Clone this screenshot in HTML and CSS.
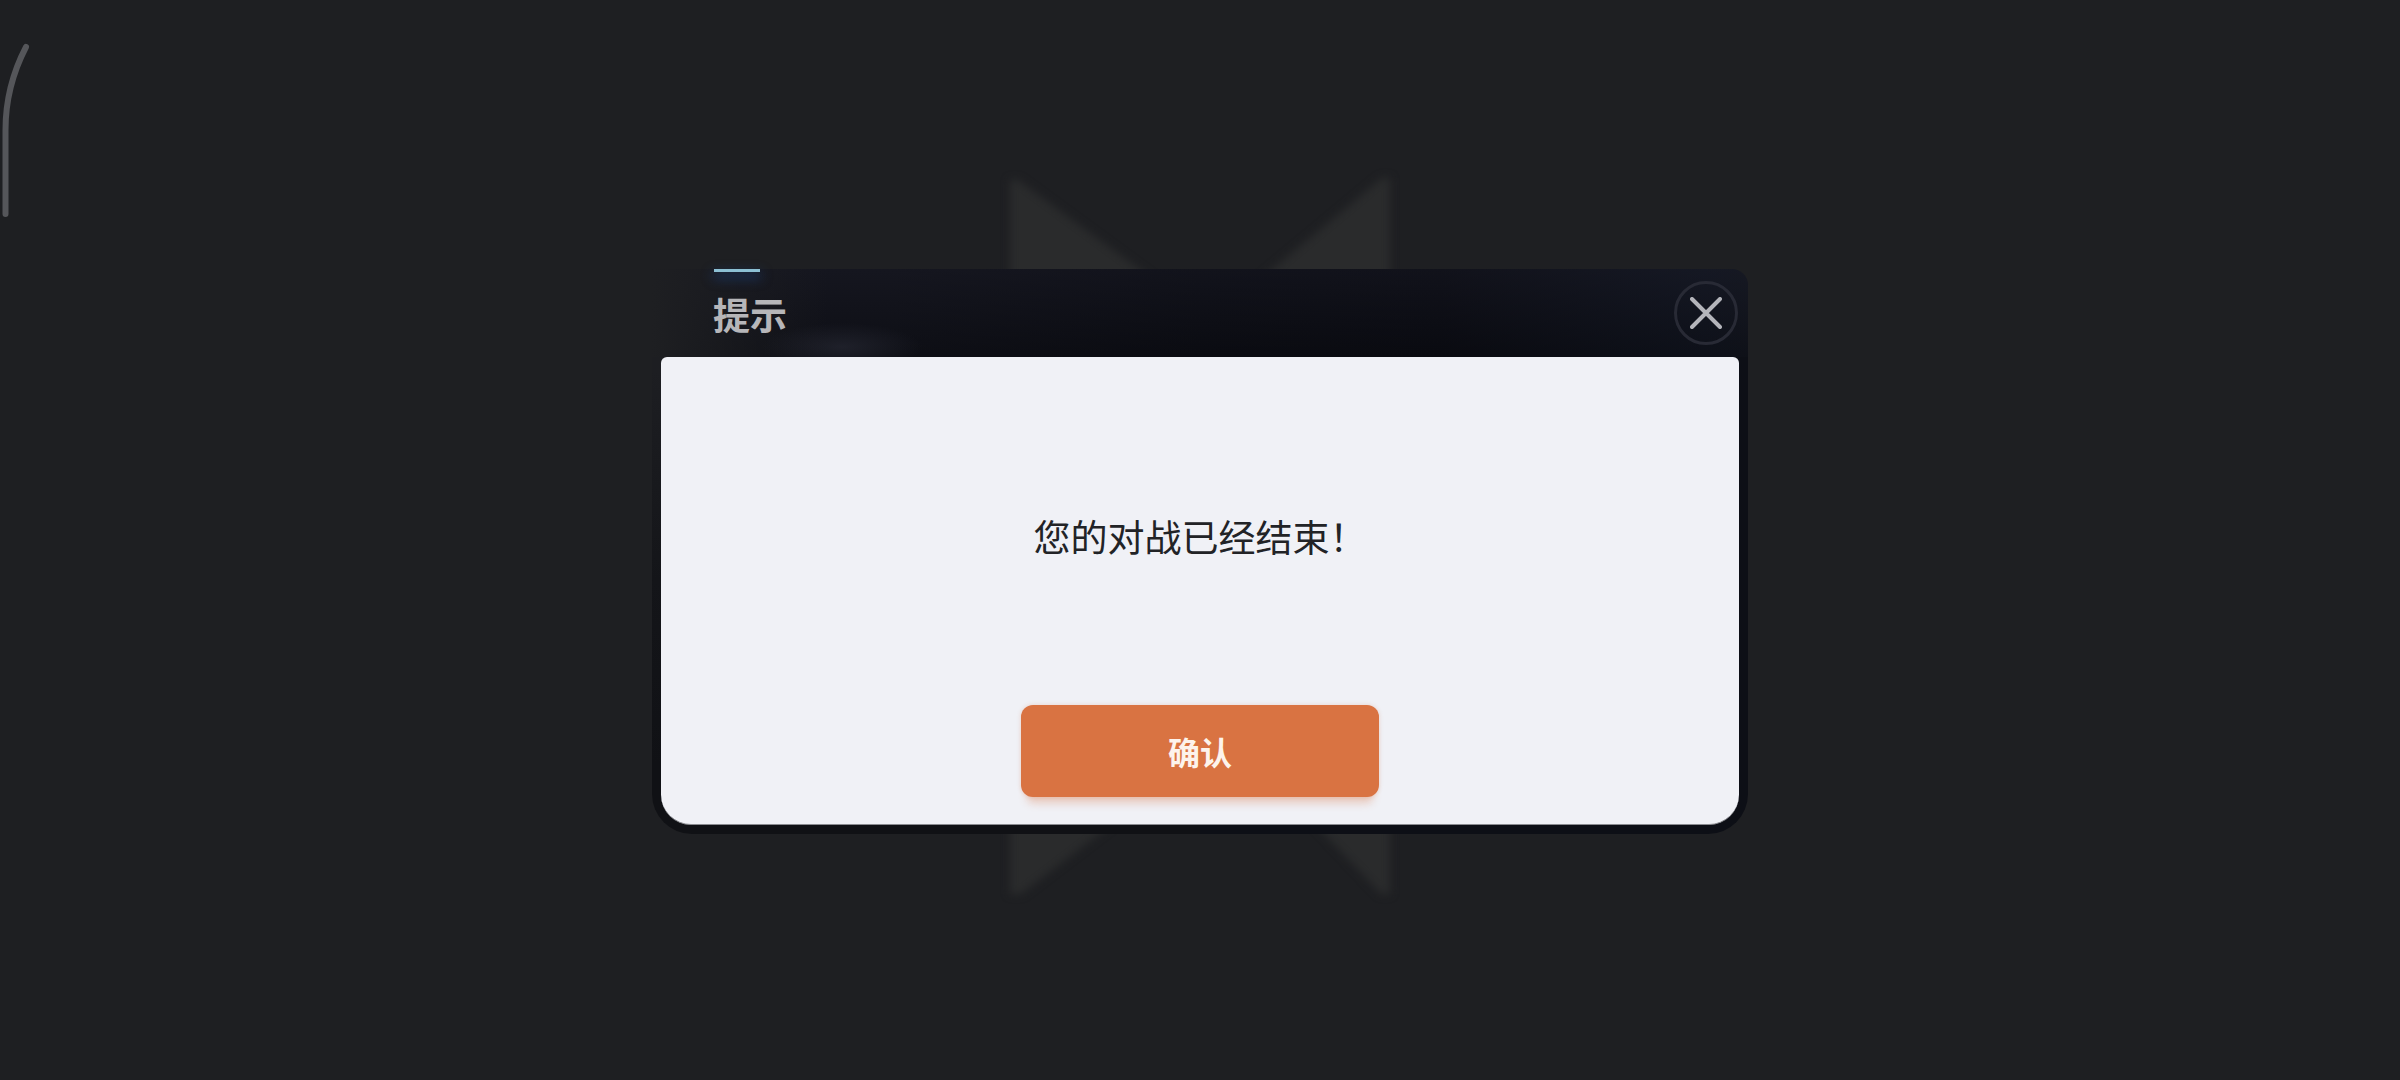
FILE: index.html
```html
<!DOCTYPE html>
<html lang="zh-CN">
<head>
<meta charset="utf-8">
<title>提示</title>
<link rel="stylesheet" href="styles.css">
</head>
<body>
<svg class="edge-handle" width="40" height="220" viewBox="0 0 40 220" aria-hidden="true"><path d="M26 47C13 72 5.500 98 5.500 130V214"/></svg>
<svg class="emblem" width="420" height="740" viewBox="0 0 420 740" aria-hidden="true"><path d="M25 8 L33 8 L172 110 L25 110Z M397 6 L405 6 L405 110 L272 110Z M25 650 L130 650 L36 722 L25 722Z M328 650 L405 650 L405 722 L396 722Z"/></svg>
<main class="stage">
  <section class="dialog">
    <header class="dialog-head">
      <span class="tab-mark"></span>
      <h1 class="dialog-title">提示</h1>
      <button class="close-btn" type="button" aria-label="关闭">
        <svg width="32" height="32" viewBox="0 0 32 32"><path d="M2 2L30 30M30 2L2 30"/></svg>
      </button>
    </header>
    <div class="dialog-body">
      <p class="message">您的对战已经结束！</p>
      <button class="confirm-btn" type="button">确认</button>
    </div>
  </section>
</main>
</body>
</html>
```
FILE: styles.css
```css
* { box-sizing: border-box; }
html, body { margin: 0; height: 100%; }
body {
  width: 2400px;
  height: 1080px;
  overflow: hidden;
  position: relative;
  background: #1e1f22;
  font-family: "Noto Sans CJK SC", "Noto Sans", sans-serif;
}
.edge-handle { position: absolute; left: 0; top: 0; }
.edge-handle path { fill: none; stroke: #55565a; stroke-width: 6; stroke-linecap: round; }
.emblem { position: absolute; left: 985px; top: 172px; filter: blur(4px); }
.emblem path { fill: #2a2b2c; }
.stage { position: relative; padding-top: 269px; display: flex; justify-content: center; }
.dialog {
  width: 1096px;
  height: 565px;
  padding: 0 9px 9px;
  display: flex;
  flex-direction: column;
  border-radius: 0 16px 40px 40px;
  background:
    radial-gradient(ellipse 80px 24px at 190px 78px, rgba(44, 46, 58, .55), transparent) top / 100% 88px no-repeat,
    linear-gradient(90deg, #1e1f22 0, rgba(30, 31, 34, .7) 5%, transparent 16%) top / 100% 88px no-repeat,
    linear-gradient(180deg, rgba(22, 23, 33, .55) 0, rgba(8, 9, 14, .55) 100%) top / 100% 88px no-repeat,
    linear-gradient(90deg, #14151d 0, #14151d 22%, #0d0e15 50%, #0b0c13 72%, #141926 96%, #161a24 100%) top / 100% 88px no-repeat,
    linear-gradient(90deg, transparent 50%, #0d0f16 50%),
    linear-gradient(180deg, #1d1e22 18%, #141519 55%, #101115 88%);
}
.dialog-head {
  height: 88px;
  flex: none;
  position: relative;
  display: flex;
  align-items: center;
  justify-content: space-between;
  padding: 0 1px 0 52px;
}
.tab-mark {
  position: absolute;
  left: 53px;
  top: 0;
  width: 46px;
  height: 3px;
  background: #8cc0d4;
  box-shadow: 0 5px 12px 1px #1c3a6c;
}
.dialog-title {
  margin: 2px 0 0;
  font-size: 37px;
  line-height: 50px;
  font-weight: 700;
  color: #b6b6b9;
}
.close-btn {
  width: 64px;
  height: 64px;
  padding: 0;
  border: 3px solid #282a35;
  border-radius: 50%;
  background: transparent;
  display: flex;
  align-items: center;
  justify-content: center;
}
.close-btn path { fill: none; stroke: #b4b5bb; stroke-width: 4; stroke-linecap: round; }
.dialog-body {
  flex: 1;
  background: #f0f1f6;
  border-radius: 6px 6px 30px 30px;
  display: flex;
  flex-direction: column;
  align-items: center;
  border-bottom: 1px solid #8a8b90;
}
.message {
  margin: 151px 0 0;
  width: 100%;
  text-align: center;
  font-size: 37px;
  line-height: 56px;
  color: #222326;
}
.confirm-btn {
  margin-top: 141px;
  width: 358px;
  height: 92px;
  border: 0;
  border-radius: 12px;
  background: #d97342;
  color: #fdf3ec;
  font-family: inherit;
  font-size: 32px;
  font-weight: 700;
  box-shadow: 0 12px 8px -6px rgba(217, 115, 66, .32), 0 0 4px rgba(217, 115, 66, .25);
}
```
